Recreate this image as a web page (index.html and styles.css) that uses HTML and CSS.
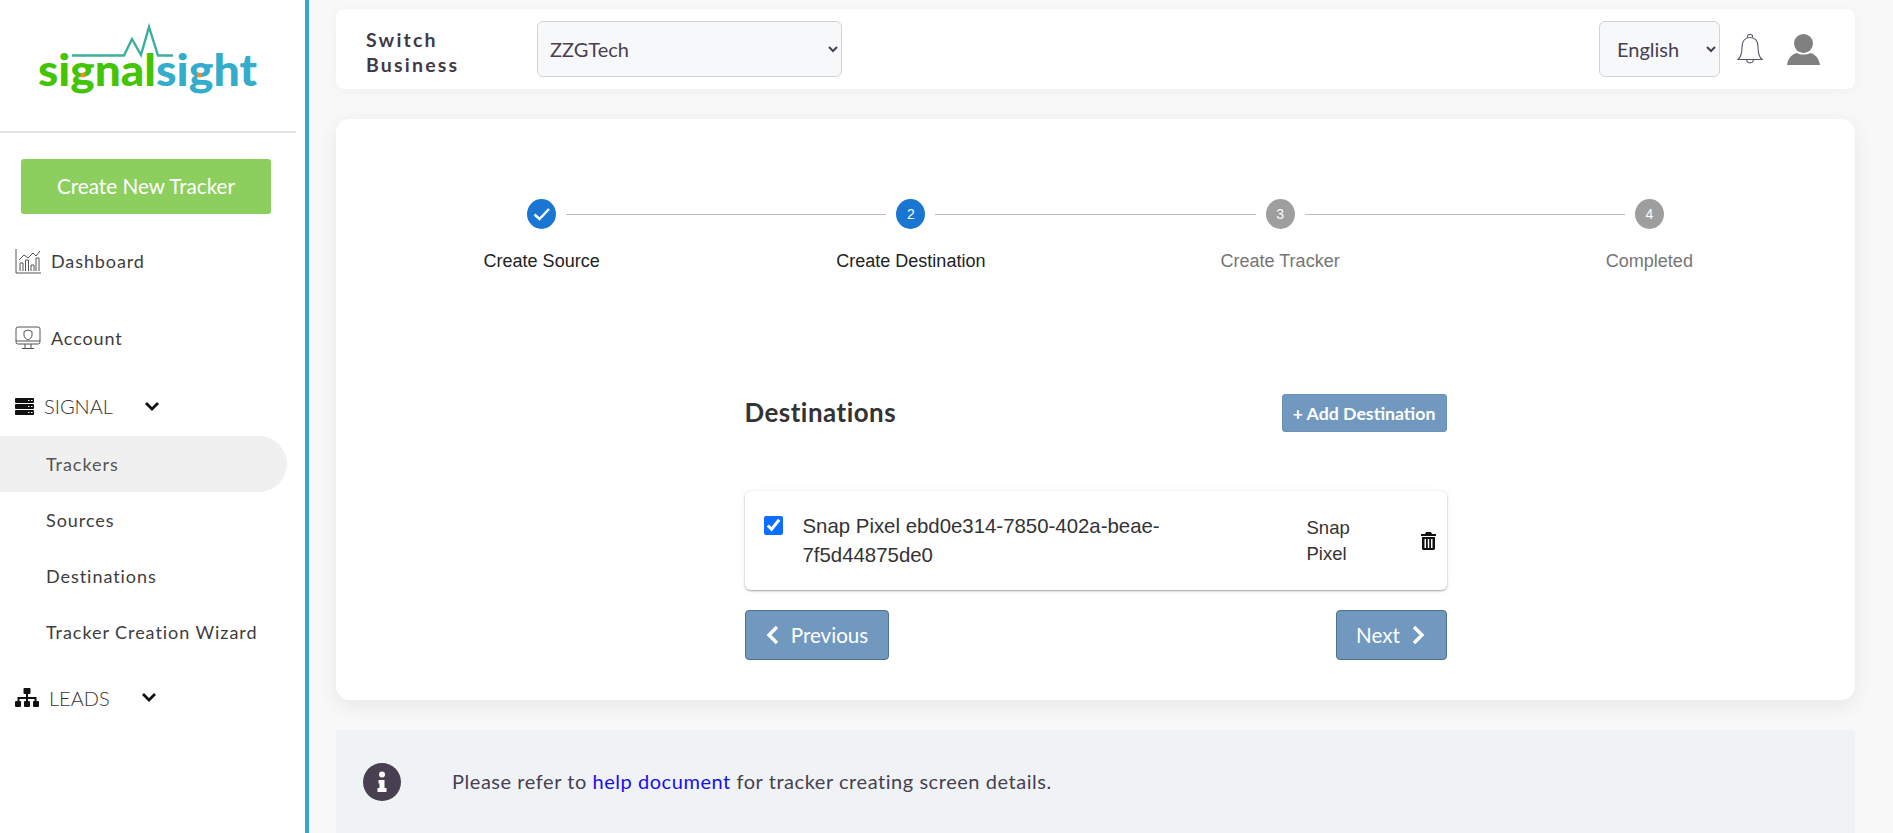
FILE: index.html
```html
<!DOCTYPE html>
<html lang="en">
<head>
    <meta charset="UTF-8">
    <title>SignalSight Tracker Creation Wizard</title>
    <link rel="stylesheet" href="styles.css">
</head>
<body>
    <aside class="sidebar">
        <div class="logo">
            <svg width="296" height="131" viewBox="0 0 296 131">
                <polyline points="72,55.5 124,55.5 132,39 141,55 149,27 158,55.5 173,55.5" fill="none" stroke="#3ab09a" stroke-width="2.4"/>
                <text x="38" y="86" class="logo-green" textLength="118" lengthAdjust="spacingAndGlyphs">signal</text>
                <text x="156" y="86" class="logo-blue" textLength="101" lengthAdjust="spacingAndGlyphs">sight</text>
                <circle cx="83" cy="75" r="2.5" fill="#f58a1f"/>
                <circle cx="199.500" cy="75" r="2.500" fill="#f58a1f"/>
            </svg>
        </div>
        <a class="create-btn">Create New Tracker</a>
        <nav class="side-nav">
            <div class="nav-row">
                <svg class="nav-icon" width="26" height="26" viewBox="0 0 26 26" fill="none" stroke="#555" stroke-width="1">
                    <path d="M1 1V25H26"/>
                    <path d="M5 23V15H8V23M10.500 23V12H13.500V23M16 23V17H19V23M21 23V10H24V23"/>
                    <path d="M4 12L9 7L13 10L18 5L21 8L25 3"/>
                </svg>
                <span>Dashboard</span>
            </div>
            <div class="nav-row">
                <svg class="nav-icon" width="26" height="24" viewBox="0 0 26 24" fill="none" stroke="#555" stroke-width="1">
                    <rect x="1" y="1" width="24" height="17" rx="2"/>
                    <path d="M1 15H25M10 18V22M16 18V22M7 22.500H19"/>
                    <path d="M13 4L17 5.500V9C17 11.500 15 13 13 14C11 13 9 11.500 9 9V5.500Z"/>
                </svg>
                <span>Account</span>
            </div>
            <div class="nav-group">
                <svg class="group-icon" width="19" height="17" viewBox="0 0 19 17">
                    <path d="M1 0H18a1 1 0 0 1 1 1V4a1 1 0 0 1-1 1H1a1 1 0 0 1-1-1V1a1 1 0 0 1 1-1ZM1 6H18a1 1 0 0 1 1 1V10a1 1 0 0 1-1 1H1a1 1 0 0 1-1-1V7a1 1 0 0 1 1-1ZM1 12H18a1 1 0 0 1 1 1V16a1 1 0 0 1-1 1H1a1 1 0 0 1-1-1V13a1 1 0 0 1 1-1Z" fill="#111"/>
                    <path d="M13 2.500H14.500M16 2.500H17.500M13 8.500H14.500M16 8.500H17.500M13 14.500H14.500M16 14.500H17.500" stroke="#fff" stroke-width="1.200"/>
                </svg>
                <span class="signal-label">SIGNAL</span>
                <svg class="chevron" width="16" height="11" viewBox="0 0 16 11"><path d="M2 2L8 8L14 2" fill="none" stroke="#111" stroke-width="2.800"/></svg>
            </div>
            <a class="sub-item active">Trackers</a>
            <a class="sub-item">Sources</a>
            <a class="sub-item">Destinations</a>
            <a class="sub-item">Tracker Creation Wizard</a>
            <div class="nav-group leads">
                <svg class="group-icon" width="24" height="19" viewBox="0 0 24 19" fill="#111">
                    <rect x="8.500" y="0" width="7" height="6" rx="1"/>
                    <rect x="0" y="13" width="6" height="6" rx="1"/>
                    <rect x="9" y="13" width="6" height="6" rx="1"/>
                    <rect x="18" y="13" width="6" height="6" rx="1"/>
                    <path d="M11 6H13V9H21.500V13H19.500V11H13V13H11V11H4.500V13H2.500V9H11Z"/>
                </svg>
                <span class="leads-label">LEADS</span>
                <svg class="chevron" width="16" height="11" viewBox="0 0 16 11"><path d="M2 2L8 8L14 2" fill="none" stroke="#111" stroke-width="2.800"/></svg>
            </div>
        </nav>
    </aside>

    <main class="content">
        <header class="top-bar">
            <div class="switch-label">Switch Business</div>
            <select class="business-select"><option>ZZGTech</option></select>
            <div class="top-right">
                <select class="lang-select"><option>English</option></select>
                <svg class="bell" width="26" height="32" viewBox="0 0 26 32" fill="none" stroke="#5b5566" stroke-width="1.100">
                    <path d="M1 26.500C4 24 5 20 5 14C5 8 8 4.500 13 4.500C18 4.500 21 8 21 14C21 20 22 24 25 26.500Z"/>
                    <path d="M10.500 4.500V3C10.500 1 15.500 1 15.500 3V4.500M9.500 26.500C10 31 16 31 16.500 26.500"/>
                </svg>
                <svg class="user" width="33" height="31" viewBox="0 0 33 31" fill="#808080">
                    <circle cx="16.500" cy="9.500" r="9.500"/>
                    <path d="M0 31C1 24 5 20 10 19C13 21 20 21 23 19C28 20 32 24 33 31Z"/>
                </svg>
            </div>
        </header>

        <section class="wizard-card">
            <div class="stepper">
                <div class="step done">
                    <div class="step-head">
                        <span class="line hidden"></span>
                        <span class="circle">
                            <svg width="18" height="14" viewBox="0 0 18 14"><path d="M1.500 7.500L6.500 12L16 2" fill="none" stroke="#fff" stroke-width="2.400"/></svg>
                        </span>
                        <span class="line"></span>
                    </div>
                    <div class="step-label">Create Source</div>
                </div>
                <div class="step current">
                    <div class="step-head">
                        <span class="line"></span>
                        <span class="circle">2</span>
                        <span class="line"></span>
                    </div>
                    <div class="step-label">Create Destination</div>
                </div>
                <div class="step">
                    <div class="step-head">
                        <span class="line"></span>
                        <span class="circle">3</span>
                        <span class="line"></span>
                    </div>
                    <div class="step-label">Create Tracker</div>
                </div>
                <div class="step">
                    <div class="step-head">
                        <span class="line"></span>
                        <span class="circle">4</span>
                        <span class="line hidden"></span>
                    </div>
                    <div class="step-label">Completed</div>
                </div>
            </div>

            <div class="destinations">
                <div class="dest-header">
                    <h2>Destinations</h2>
                    <button class="btn add-btn">+ Add Destination</button>
                </div>
                <div class="dest-item">
                    <input type="checkbox" class="dest-check" checked>
                    <div class="dest-name">Snap Pixel ebd0e314-7850-402a-beae-7f5d44875de0</div>
                    <div class="dest-type">Snap Pixel</div>
                    <svg class="trash" width="15" height="18" viewBox="0 0 15 18">
                        <path d="M5 0H10L11 2H15V4H0V2H4ZM1 5H14V16.500C14 17.300 13.300 18 12.500 18H2.500C1.700 18 1 17.300 1 16.500ZM3.500 7V16H5V7ZM6.750 7V16H8.250V7ZM10 7V16H11.500V7Z" fill="#111" fill-rule="evenodd"/>
                    </svg>
                </div>
                <div class="dest-nav">
                    <button class="btn nav-btn prev">
                        <svg width="14" height="20" viewBox="0 0 14 20"><path d="M12 2L4 10L12 18" fill="none" stroke="#fff" stroke-width="3.400"/></svg>
                        Previous
                    </button>
                    <button class="btn nav-btn next">
                        Next
                        <svg width="14" height="20" viewBox="0 0 14 20"><path d="M2 2L10 10L2 18" fill="none" stroke="#fff" stroke-width="3.400"/></svg>
                    </button>
                </div>
            </div>
        </section>

        <section class="notice">
            <svg class="info" width="38" height="38" viewBox="0 0 38 38">
                <circle cx="19" cy="19" r="19" fill="#483f50"/>
                <circle cx="19" cy="11.500" r="3" fill="#fff"/>
                <path d="M15.500 17H21.500V25H23.500V29H14.500V25H16.500V20.500H15.500Z" fill="#fff"/>
            </svg>
            <p>Please refer to <a href="#">help document</a> for tracker creating screen details.</p>
        </section>
    </main>
</body>
</html>
```

FILE: styles.css
```css
html, body {
    height: 100%;
}

body {
    display: flex;
    margin: 0;
    height: 833px;
    overflow: hidden;
    font-family: Lato, "Open Sans", sans-serif;
    color: #333;
    background-color: #f8f8f8;
}

/* sidebar */
.sidebar {
    flex: 0 0 305px;
    background-color: #fff;
    border-right: 4px solid #33a9c9;
}

.logo {
    width: 296px;
    height: 131px;
    border-bottom: 2px solid #e3e3e3;
}

.logo svg {
    display: block;
}

.logo-green, .logo-blue {
    font-family: Lato, sans-serif;
    font-size: 44px;
    font-weight: 900;
}

.logo-green {
    fill: #43c404;
}

.logo-blue {
    fill: #33adcb;
}

.create-btn {
    display: flex;
    align-items: center;
    justify-content: center;
    height: 53px;
    padding-bottom: 2px;
    margin: 26px 34px 8px 21px;
    background-color: #8dcf5e;
    border-radius: 3px;
    color: #fff;
    font-size: 20.7px;
}

.nav-row {
    display: flex;
    align-items: center;
    height: 77px;
    padding-left: 15px;
    font-size: 18px;
    letter-spacing: 0.9px;
    color: #3d3d3d;
}

.nav-icon {
    margin-right: 10px;
}

.nav-group {
    display: flex;
    align-items: center;
    height: 60px;
    padding-left: 15px;
    font-size: 20px;
    font-weight: 300;
}

.nav-group.leads {
    height: 75px;
}

.signal-label {
    width: 100px;
    margin-left: 10px;
}

.leads-label {
    width: 92px;
    margin-left: 10px;
}

.sub-item {
    display: flex;
    align-items: center;
    height: 56px;
    padding-left: 46px;
    width: 241px;
    font-size: 18px;
    letter-spacing: 0.95px;
    color: #3d3d3d;
}

.sub-item.active {
    background-color: #f0f0f0;
    border-radius: 0 28px 28px 0;
    color: #555;
}

/* main column */
.content {
    flex: 1;
    padding: 9px 38px 0 27px;
    min-width: 0;
}

.top-bar {
    display: flex;
    align-items: center;
    height: 80px;
    padding: 0 35px 0 30px;
    background-color: #fff;
    border-radius: 8px;
    box-shadow: 0 2px 12px rgba(0,0,0,0.04);
    box-sizing: border-box;
}

.switch-label {
    width: 110px;
    margin-right: 61px;
    padding-top: 5px;
    font-size: 19.5px;
    font-weight: 700;
    line-height: 25px;
    letter-spacing: 2.2px;
    color: #3f3a45;
}

select {
    height: 56px;
    background-color: #f7f8fa;
    border: 1px solid #ced4da;
    border-radius: 6px;
    font-family: Lato, sans-serif;
    font-size: 20px;
    color: #483f50;
    padding: 0 8px 0 8px;
}

.business-select {
    width: 305px;
}

.top-right {
    display: flex;
    align-items: center;
    margin-left: auto;
}

.lang-select {
    width: 121px;
    padding-left: 13px;
    padding-right: 2px;
}

.bell {
    margin: 0 24px 0 17px;
}

.wizard-card {
    margin-top: 30px;
    height: 581px;
    padding: 80px 21px 40px;
    background-color: #fff;
    border-radius: 14px;
    box-shadow: 0 6px 20px rgba(0,0,0,0.07);
    box-sizing: border-box;
}

/* stepper */
.stepper {
    display: flex;
}

.step {
    flex: 1;
    font-family: "Liberation Sans", Arial, sans-serif;
    text-align: center;
}

.step-head {
    display: flex;
    align-items: center;
    height: 30px;
}

.line {
    flex: 1;
    height: 1px;
    background-color: #bdbdbd;
}

.line.hidden {
    visibility: hidden;
}

.circle {
    display: flex;
    align-items: center;
    justify-content: center;
    width: 29px;
    height: 30px;
    margin: 0 10px;
    border-radius: 50%;
    background-color: #9e9e9e;
    color: #fff;
    font-size: 14px;
}

.done .circle, .current .circle {
    background-color: #1976d2;
}

.step-label {
    margin-top: 21px;
    font-size: 18px;
    line-height: 22px;
    color: #757575;
}

.done .step-label, .current .step-label {
    color: #222;
}

/* destination list */
.destinations {
    width: 702px;
    margin: 0 auto;
    padding-top: 122px;
}

.dest-header {
    display: flex;
    align-items: center;
    justify-content: space-between;
}

.dest-header h2 {
    margin: 0 0 3px;
    font-size: 25.9px;
    font-weight: 700;
    letter-spacing: 0.5px;
}

.btn {
    background-color: #7199bf;
    color: #fff;
    font-family: Lato, sans-serif;
    font-weight: 700;
    border: 1px solid #6a90b4;
    border-radius: 3px;
}

.add-btn {
    width: 165px;
    height: 38px;
    padding: 0;
    font-size: 17.7px;
}

.dest-item {
    display: flex;
    align-items: center;
    height: 99px;
    margin-top: 59px;
    padding: 0 11px 0 19px;
    border-radius: 6px;
    box-shadow: 0 1px 2px rgba(0,0,0,0.35), 0 0 6px rgba(0,0,0,0.06);
    font-family: "Liberation Sans", Arial, sans-serif;
    color: #333;
    box-sizing: border-box;
}

.dest-check {
    align-self: flex-start;
    width: 19px;
    height: 19px;
    margin: 25px 20px 0 0;
    accent-color: #0d6efd;
}

.dest-name {
    width: 400px;
    margin-right: 104px;
    font-size: 20.4px;
    line-height: 29px;
}

.dest-type {
    width: 60px;
    font-size: 18.5px;
    line-height: 26px;
}

.trash {
    margin-left: auto;
}

.dest-nav {
    display: flex;
    justify-content: space-between;
    margin-top: 20px;
}

.nav-btn {
    display: flex;
    align-items: center;
    justify-content: center;
    gap: 12px;
    height: 50px;
    font-size: 20.6px;
    font-weight: 400;
    border: 1px solid #4f6f8f;
    border-radius: 4px;
}

.prev {
    width: 144px;
}

.next {
    width: 111px;
}

/* help notice */
.notice {
    display: flex;
    align-items: center;
    height: 103px;
    margin-top: 30px;
    padding: 0 0 0 27px;
    background-color: #eff3f6;
    box-sizing: border-box;
}

.notice p {
    margin: 0 0 2px 51px;
    font-size: 20px;
    letter-spacing: 0.55px;
    color: #483f50;
}

.notice a {
    color: #1a0dea;
    text-decoration: none;
}
```
